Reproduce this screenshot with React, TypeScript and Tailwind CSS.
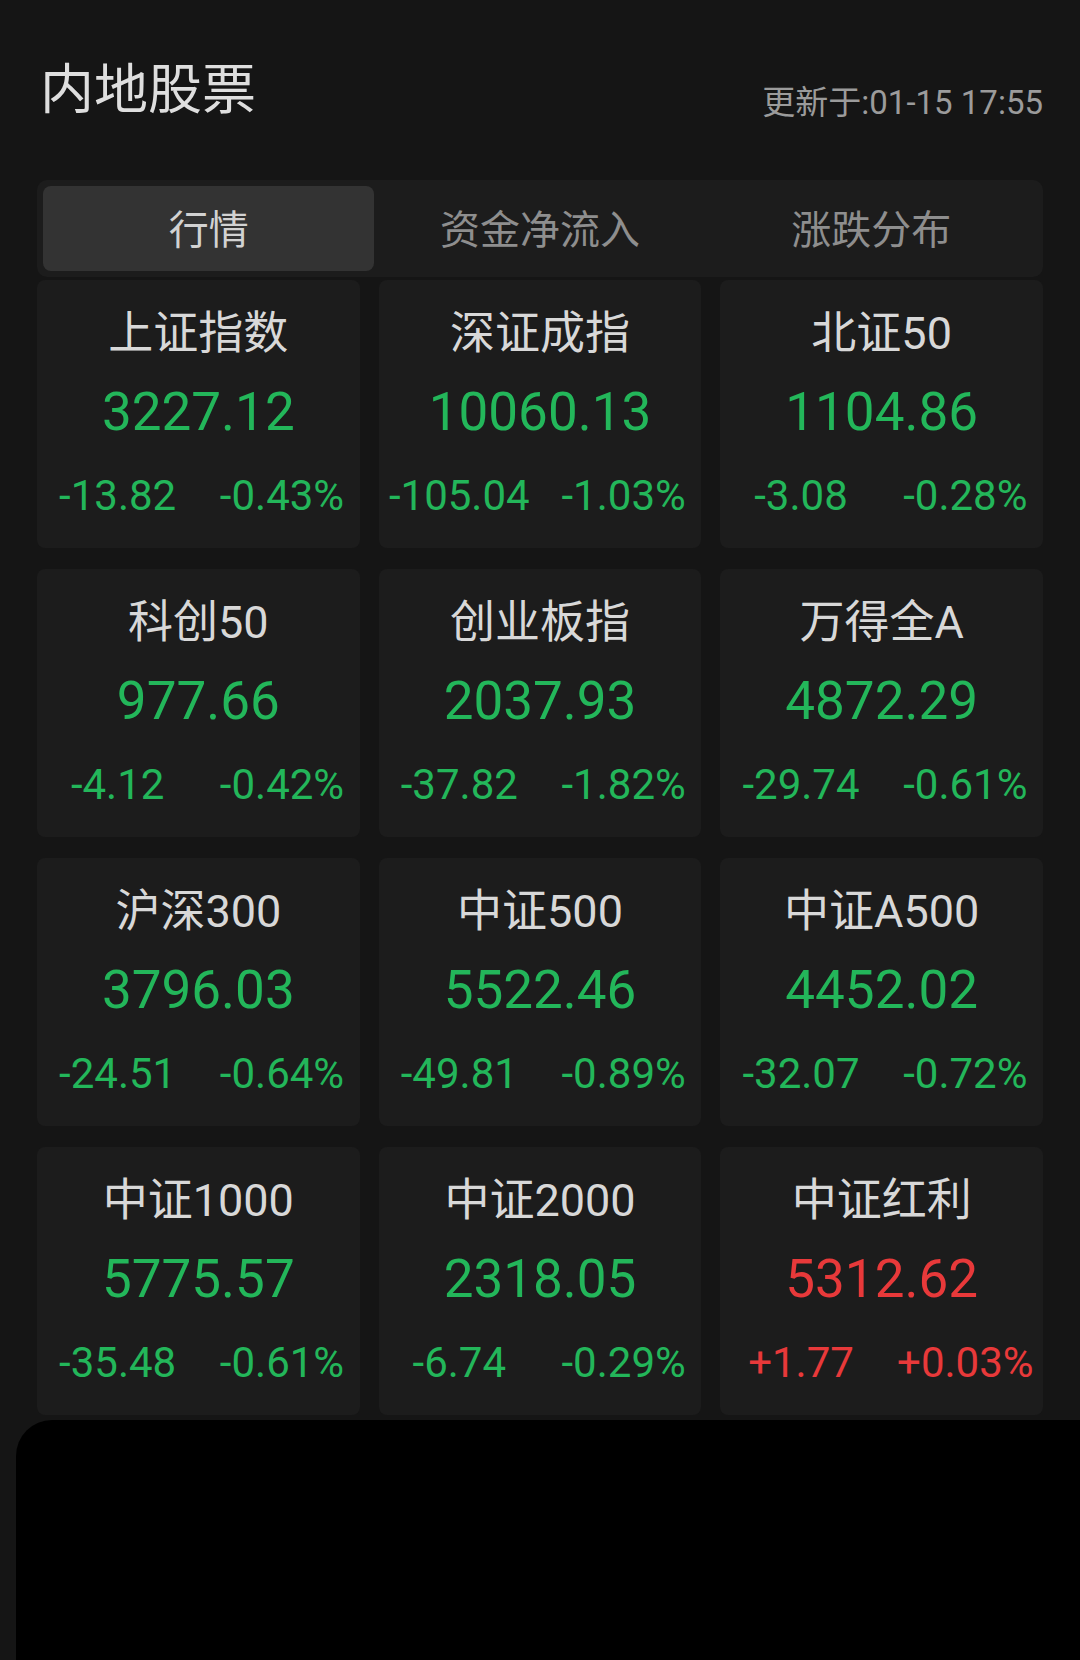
import React from "react";

type Index = {
  name: string;
  value: string;
  change: string;
  pct: string;
  up?: boolean;
};

const indices: Index[] = [
  { name: "上证指数", value: "3227.12", change: "-13.82", pct: "-0.43%" },
  { name: "深证成指", value: "10060.13", change: "-105.04", pct: "-1.03%" },
  { name: "北证50", value: "1104.86", change: "-3.08", pct: "-0.28%" },
  { name: "科创50", value: "977.66", change: "-4.12", pct: "-0.42%" },
  { name: "创业板指", value: "2037.93", change: "-37.82", pct: "-1.82%" },
  { name: "万得全A", value: "4872.29", change: "-29.74", pct: "-0.61%" },
  { name: "沪深300", value: "3796.03", change: "-24.51", pct: "-0.64%" },
  { name: "中证500", value: "5522.46", change: "-49.81", pct: "-0.89%" },
  { name: "中证A500", value: "4452.02", change: "-32.07", pct: "-0.72%" },
  { name: "中证1000", value: "5775.57", change: "-35.48", pct: "-0.61%" },
  { name: "中证2000", value: "2318.05", change: "-6.74", pct: "-0.29%" },
  { name: "中证红利", value: "5312.62", change: "+1.77", pct: "+0.03%", up: true },
];

const tabs = ["行情", "资金净流入", "涨跌分布"];

const sans = "font-['Roboto','Noto_Sans_CJK_SC',sans-serif]";

function IndexCard({ item }: { item: Index }) {
  const color = item.up ? "text-[#e8393a]" : "text-[#23b65a]";
  return (
    <div className="h-[268px] rounded-[8px] bg-[#1c1c1c] flex flex-col items-center pt-[31px]">
      <div className="text-[45px] leading-none text-[#d8d8d8]">{item.name}</div>
      <div className={`mt-[30px] text-[53px] leading-none ${color}`}>{item.value}</div>
      <div className={`mt-[36px] w-full grid grid-cols-2 text-center text-[42px] leading-none ${color}`}>
        <span>{item.change}</span>
        <span className="pl-[6px]">{item.pct}</span>
      </div>
    </div>
  );
}

export default function App() {
  return (
    <div className={`w-[1080px] h-[1660px] bg-[#151515] flex flex-col overflow-hidden ${sans}`}>
      <header className="h-[180px] flex items-start justify-between pl-[40px] pr-[37px]">
        <h1 className="mt-[64px] text-[54px] leading-none font-normal text-[#dedede]">内地股票</h1>
        <span className="mt-[86px] text-[33px] leading-none text-[#9b9b9b] font-['Liberation_Sans_Narrow','Roboto','Noto_Sans_CJK_SC',sans-serif]">
          更新于:01-15 17:55
        </span>
      </header>

      <nav className="mx-[37px] h-[97px] rounded-[10px] bg-[#1c1c1c] p-[6px] flex">
        {tabs.map((t, i) => (
          <div
            key={t}
            className={`flex-1 flex items-center justify-center rounded-[8px] pt-[4px] text-[40px] leading-none ${
              i === 0 ? "bg-[#333333] text-[#d2d2d2]" : "text-[#8e8e8e]"
            }`}
          >
            {t}
          </div>
        ))}
      </nav>

      <section className="mt-[3px] mx-[37px] grid grid-cols-3 gap-x-[19px] gap-y-[21px]">
        {indices.map((it) => (
          <IndexCard key={it.name} item={it} />
        ))}
      </section>

      <div className="flex-1 mt-[5px] ml-[16px] bg-black rounded-tl-[36px]" />
    </div>
  );
}
